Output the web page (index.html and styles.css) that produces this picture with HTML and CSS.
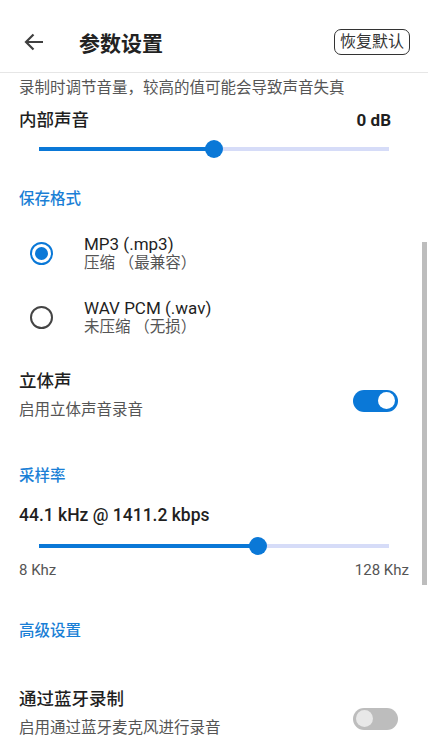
FILE: index.html
```html
<!DOCTYPE html>
<html lang="zh-CN">
<head>
    <meta charset="UTF-8">
    <meta name="viewport" content="width=device-width, initial-scale=1.0">
    <title>参数设置</title>
    <link rel="stylesheet" href="styles.css">
</head>
<body>
    <div class="screen">
        <header class="app-bar">
            <button class="back-button" aria-label="返回">
                <svg width="20" height="18" viewBox="0 0 20 18">
                    <path d="M19 9H2.5M9.5 1.5L2 9l7.5 7.5" fill="none" stroke="#404040" stroke-width="2.2"/>
                </svg>
            </button>
            <h1 class="app-title">参数设置</h1>
            <button class="reset-button">恢复默认</button>
        </header>

        <main class="content">
            <p class="hint">录制时调节音量，较高的值可能会导致声音失真</p>
            <div class="value-row">
                <span class="row-title">内部声音</span>
                <span class="value-text">0 dB</span>
            </div>
            <div class="slider">
                <div class="track">
                    <div class="track-fill" style="width: 50%"></div>
                    <div class="thumb" style="left: 50%"></div>
                </div>
            </div>

            <h2 class="section-title">保存格式</h2>
            <div class="radio-row">
                <span class="radio checked"></span>
                <div class="radio-text">
                    <div class="row-title">MP3 (.mp3)</div>
                    <div class="row-sub">压缩 （最兼容）</div>
                </div>
            </div>
            <div class="radio-row">
                <span class="radio"></span>
                <div class="radio-text">
                    <div class="row-title">WAV PCM (.wav)</div>
                    <div class="row-sub">未压缩 （无损）</div>
                </div>
            </div>

            <div class="switch-row stereo">
                <div class="switch-text">
                    <div class="row-title">立体声</div>
                    <div class="row-sub">启用立体声音录音</div>
                </div>
                <span class="switch on"><span class="knob"></span></span>
            </div>

            <h2 class="section-title rate-title">采样率</h2>
            <div class="rate-value">44.1 kHz @ 1411.2 kbps</div>
            <div class="slider rate-slider">
                <div class="track">
                    <div class="track-fill" style="width: 62.6%"></div>
                    <div class="thumb" style="left: 62.6%"></div>
                </div>
            </div>
            <div class="range-labels">
                <span>8 Khz</span>
                <span>128 Khz</span>
            </div>

            <h2 class="section-title advanced-title">高级设置</h2>
            <div class="switch-row bluetooth">
                <div class="switch-text">
                    <div class="row-title">通过蓝牙录制</div>
                    <div class="row-sub">启用通过蓝牙麦克风进行录音</div>
                </div>
                <span class="switch"><span class="knob"></span></span>
            </div>

            <div class="scrollbar"></div>
        </main>
    </div>
</body>
</html>
```

FILE: styles.css
```css
body {
    margin: 0;
    background: #fff;
    color: #1f1f1f;
    font-family: Roboto, "Noto Sans CJK SC", sans-serif;
}

.screen {
    width: 428px;
    height: 737px;
    overflow: hidden;
}

.app-bar {
    height: 60px;
    padding: 12px 18px 0 24px;
    border-bottom: 1px solid #e6e6e6;
    display: flex;
    align-items: center;
}

.back-button {
    background: none;
    border: none;
    padding: 0;
    width: 20px;
    height: 18px;
    display: flex;
}

.app-title {
    margin: 0 0 0 35px;
    font-size: 21px;
    font-weight: 700;
    color: #222;
    flex: 1;
}

.reset-button {
    font-family: inherit;
    font-size: 16px;
    color: #333;
    background: #fff;
    border: 1.5px solid #333;
    border-radius: 7px;
    height: 26px;
    padding: 0 5px;
    line-height: 22px;
}

.content {
    position: relative;
    height: 664px;
    padding-left: 19px;
}

.hint {
    margin: 0;
    padding-top: 5px;
    font-size: 15.5px;
    line-height: 20px;
    color: #555;
}

.value-row {
    display: flex;
    justify-content: space-between;
    margin-top: 11px;
    padding-right: 37px;
    line-height: 22px;
}

.row-title {
    font-size: 17.5px;
    font-weight: 500;
    color: #1f1f1f;
}

.value-text {
    font-size: 17px;
    font-weight: 700;
}

.row-sub {
    font-size: 15.5px;
    color: #555;
}

.slider {
    margin: 8px 0 0 20px;
    width: 350px;
    height: 20px;
    display: flex;
    align-items: center;
}

.track {
    position: relative;
    width: 100%;
    height: 4px;
    background: #d6dcf8;
}

.track-fill {
    height: 100%;
    background: #0a78d7;
}

.thumb {
    position: absolute;
    top: -7px;
    width: 18px;
    height: 18px;
    margin-left: -9px;
    border-radius: 50%;
    background: #0a78d7;
}

.section-title {
    margin: 30px 0 0;
    font-size: 15.5px;
    font-weight: 500;
    line-height: 20px;
    color: #1a7fd6;
}

.section-title + .radio-row {
    margin-top: 12px;
}

.radio-row {
    height: 64px;
    display: flex;
    align-items: center;
}

.radio {
    width: 23px;
    height: 23px;
    box-sizing: border-box;
    border: 2.2px solid #444;
    border-radius: 50%;
    margin-left: 11px;
    display: flex;
    align-items: center;
    justify-content: center;
}

.radio.checked {
    border-color: #0a78d7;
}

.radio.checked::after {
    content: "";
    width: 13px;
    height: 13px;
    border-radius: 50%;
    background: #0a78d7;
}

.radio-text {
    margin-left: 31px;
}

.radio-text .row-title {
    font-size: 17px;
    font-weight: 400;
    line-height: 20px;
}

.radio-text .row-sub {
    line-height: 18px;
}

.switch-row {
    display: flex;
    align-items: center;
    justify-content: space-between;
    padding-right: 30px;
}

.switch-row .row-title {
    line-height: 22px;
}

.switch-row .row-sub {
    line-height: 20px;
    margin-top: 8px;
}

.stereo {
    margin-top: 21px;
}

.switch-row .switch {
    margin-top: 11px;
}

.switch {
    width: 45px;
    height: 22px;
    border-radius: 11px;
    background: #bdbdbd;
    display: flex;
    align-items: center;
    padding: 0 3px;
    box-sizing: border-box;
}

.knob {
    width: 17px;
    height: 17px;
    border-radius: 50%;
    background: #e8e8e8;
}

.switch.on {
    background: #0a78d7;
    justify-content: flex-end;
}

.switch.on .knob {
    background: #fff;
}

.rate-title {
    margin-top: 46px;
}

.rate-value {
    margin-top: 18px;
    font-size: 17.5px;
    font-weight: 500;
    line-height: 22px;
}

.rate-slider {
    margin-top: 10px;
}

.range-labels {
    display: flex;
    justify-content: space-between;
    margin-top: 5px;
    padding-right: 19px;
    font-size: 15px;
    line-height: 18px;
    color: #555;
}

.advanced-title {
    margin-top: 42px;
}

.bluetooth {
    margin-top: 47px;
}

.scrollbar {
    position: absolute;
    right: 1px;
    top: 169px;
    width: 5px;
    height: 343px;
    background: #bdbdbd;
}
```
